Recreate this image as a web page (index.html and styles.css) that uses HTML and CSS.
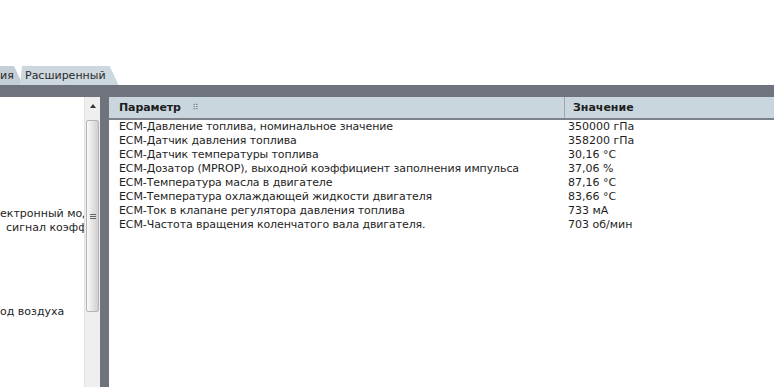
FILE: index.html
```html
<!DOCTYPE html>
<html lang="ru">
<head>
  <meta charset="UTF-8">
  <title>Параметры ECM</title>
  <link rel="stylesheet" href="styles.css">
</head>
<body>
  <div class="top-space"></div>
  <div class="tabs">
    <div class="tab tab-first">ия</div>
    <div class="tab tab-active">Расширенный</div>
  </div>
  <div class="frame">
    <div class="tree">
      <div class="tree-row">ектронный модуль управления</div>
      <div class="tree-row tree-indent">сигнал коэффициента</div>
      <div class="tree-row"></div>
      <div class="tree-row"></div>
      <div class="tree-row"></div>
      <div class="tree-row"></div>
      <div class="tree-row"></div>
      <div class="tree-row">од воздуха</div>
    </div>
    <div class="scrollbar">
      <div class="scroll-up"></div>
      <div class="scroll-thumb"><span class="grip"></span></div>
    </div>
    <div class="grid">
      <div class="grid-head">
        <div class="col-param">Параметр <span class="drag">⠿</span></div>
        <div class="col-value">Значение</div>
      </div>
      <div class="grid-body">
        <div class="row"><div class="col-param">ECM-Давление топлива, номинальное значение</div><div class="col-value">350000 гПа</div></div>
        <div class="row"><div class="col-param">ECM-Датчик давления топлива</div><div class="col-value">358200 гПа</div></div>
        <div class="row"><div class="col-param">ECM-Датчик температуры топлива</div><div class="col-value">30,16 °C</div></div>
        <div class="row"><div class="col-param">ECM-Дозатор (MPROP), выходной коэффициент заполнения импульса</div><div class="col-value">37,06 %</div></div>
        <div class="row"><div class="col-param">ECM-Температура масла в двигателе</div><div class="col-value">87,16 °C</div></div>
        <div class="row"><div class="col-param">ECM-Температура охлаждающей жидкости двигателя</div><div class="col-value">83,66 °C</div></div>
        <div class="row"><div class="col-param">ECM-Ток в клапане регулятора давления топлива</div><div class="col-value">733 мА</div></div>
        <div class="row"><div class="col-param">ECM-Частота вращения коленчатого вала двигателя.</div><div class="col-value">703 об/мин</div></div>
      </div>
    </div>
  </div>
</body>
</html>
```
FILE: styles.css
```css
:root {
  --frame-dark: #6f737c;
  --tab-bg: #c8d3da;
  --head-bg: #c9d6dd;
  --text-main: #1e1e1e;
}
html, body {
  height: 100%;
}
body {
  margin: 0;
  background: #fff;
  font-family: "DejaVu Sans", Verdana, sans-serif;
  font-size: 11px;
  color: var(--text-main);
  display: flex;
  flex-direction: column;
  overflow: hidden;
}
.top-space {
  height: 66px;
  flex: none;
}
.tabs {
  display: flex;
  height: 19px;
  flex: none;
  align-items: stretch;
}
.tab {
  background: var(--tab-bg);
  font-size: 11px;
  line-height: 19px;
  color: #2a2a2a;
  clip-path: polygon(0 0, calc(100% - 9px) 0, 100% 100%, 0 100%);
}
.tab-first {
  width: 23px;
  background: #c3ced5;
}
.tab-active {
  margin-left: -3px;
  padding: 0 13px 0 5px;
  background: #ccd7de;
  clip-path: polygon(2px 0, calc(100% - 9px) 0, 100% 100%, 0 100%);
}
.frame {
  flex: 1;
  background: var(--frame-dark);
  padding-top: 12px;
  display: flex;
  min-height: 0;
}
.tree {
  width: 84px;
  background: #fff;
  padding-top: 110px;
  overflow: hidden;
}
.tree-row {
  height: 14px;
  line-height: 14px;
  white-space: nowrap;
  overflow: hidden;
}
.tree-indent {
  padding-left: 6px;
}
.scrollbar {
  width: 15px;
  background: #efefef;
  border-left: 1px solid #e2e2e2;
  display: flex;
  flex-direction: column;
  align-items: center;
}
.scroll-up {
  margin-top: 7px;
  width: 0;
  height: 0;
  border-left: 3px solid transparent;
  border-right: 3px solid transparent;
  border-bottom: 4px solid #333;
}
.scroll-thumb {
  margin-top: 12px;
  width: 13px;
  height: 192px;
  box-sizing: border-box;
  border: 1px solid #b4b4b4;
  border-radius: 2px;
  background: linear-gradient(to right, #fafafa 0%, #e6e6e6 45%, #cfcfcf 100%);
  display: flex;
  align-items: center;
  justify-content: center;
}
.grip {
  width: 6px;
  height: 5px;
  border-top: 1px solid #666;
  border-bottom: 1px solid #666;
  box-sizing: border-box;
  background: linear-gradient(#666, #666) center / 100% 1px no-repeat;
}
.grid {
  flex: 1;
  margin-left: 9px;
  background: #fff;
  display: flex;
  flex-direction: column;
}
.grid-head {
  display: flex;
  height: 21px;
  background: var(--head-bg);
  border-bottom: 2px solid #7d8188;
  font-weight: bold;
  line-height: 21px;
}
.grid-head .col-param {
  width: 445px;
  border-right: 1px solid #9ea6ab;
}
.drag {
  font-weight: normal;
  font-size: 8px;
  color: #777;
  margin-left: 8px;
  vertical-align: 1px;
}
.col-param {
  padding-left: 10px;
  white-space: nowrap;
  overflow: hidden;
  letter-spacing: -0.1px;
}
.col-value {
  flex: 1;
  padding-left: 8px;
  white-space: nowrap;
}
.row {
  display: flex;
  height: 14px;
  line-height: 14px;
}
.row .col-param {
  width: 439px;
}
.row .col-value {
  padding-left: 10px;
}
```
